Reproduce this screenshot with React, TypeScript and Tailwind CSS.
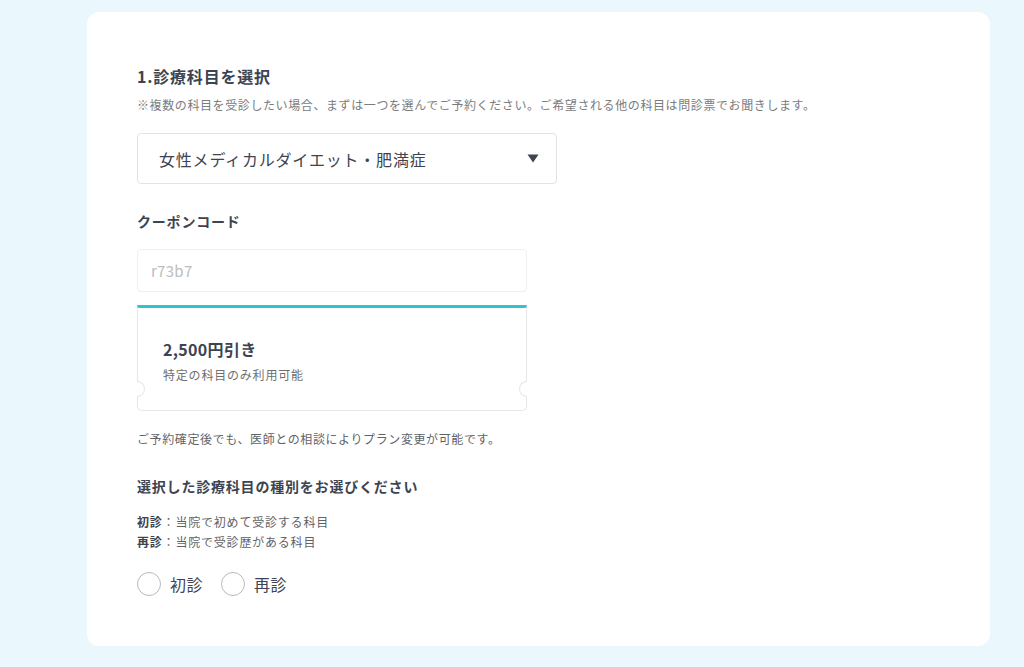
import { useState } from "react";

const font = { fontFamily: '"Noto Sans CJK JP", "Noto Sans", sans-serif' };

function Radio({ label, checked, onClick }: { label: string; checked: boolean; onClick: () => void }) {
  return (
    <button type="button" onClick={onClick} className="flex items-center gap-[9px]">
      <span className="flex h-6 w-6 items-center justify-center rounded-full border-[1.5px] border-[#b9b9b9] bg-white">
        {checked ? <span className="h-3 w-3 rounded-full bg-[#2ec5ce]" /> : null}
      </span>
      <span className="text-[16px] leading-6 tracking-[0.03em] text-[#3d4451]">{label}</span>
    </button>
  );
}

export default function App() {
  const [kind, setKind] = useState<string | null>(null);

  return (
    <div className="min-h-screen bg-[#eaf7fd] pt-3" style={font}>
      <div className="ml-[87px] h-[634px] w-[903px] rounded-xl bg-white pl-[50px] pt-[52px] tracking-[0.05em] text-[#3d4451]">
        <h2 className="text-[16px] font-bold leading-6">1.診療科目を選択</h2>
        <p className="mt-2 text-[12px] leading-[18px] tracking-[0.05em] text-[#7c7c7c]">
          ※複数の科目を受診したい場合、まずは一つを選んでご予約ください。ご希望される他の科目は問診票でお聞きします。
        </p>

        <div className="mt-[19px] flex h-[51px] w-[420px] items-center justify-between rounded-[4px] border border-[#e3e3e3] pl-[21px] pr-[17px]">
          <span className="text-[16px] leading-6 text-[#3d4451]">女性メディカルダイエット・肥満症</span>
          <svg width="12" height="9" viewBox="0 0 12 9" className="mt-[-1px]">
            <path d="M0.5 0.5 H11.5 L6 8.5 Z" fill="#3d4451" />
          </svg>
        </div>

        <h3 className="mt-[27px] text-[14px] font-bold leading-5">クーポンコード</h3>
        <div className="mt-[18px] flex h-[43px] w-[390px] items-center rounded-[4px] border border-[#f0f0f0] pl-[13px]">
          <span className="text-[15px] leading-6 tracking-[0.02em] text-[#bcbcbc]">r73b7</span>
        </div>

        <div className="relative mt-[13px] h-[106px] w-[390px] rounded-b-[5px] border-x border-b border-[#e6e6e6] border-t-[3px] border-t-[#2ec5ce] pl-[25px] pt-[29px]">
          <div className="text-[16px] font-bold leading-6 tracking-[0.02em]">2,500円引き</div>
          <div className="mt-[5px] text-[12px] leading-[18px] text-[#6f6f6f]">特定の科目のみ利用可能</div>
          <span className="absolute left-[-1px] top-[73px] h-[16px] w-[8px] rounded-r-full border-y border-r border-[#e6e6e6] bg-white" />
          <span className="absolute right-[-1px] top-[73px] h-[16px] w-[8px] rounded-l-full border-y border-l border-[#e6e6e6] bg-white" />
        </div>

        <p className="mt-[19px] text-[12px] leading-[18px] tracking-[0.05em] text-[#5f6368]">
          ご予約確定後でも、医師との相談によりプラン変更が可能です。
        </p>

        <h3 className="mt-[28px] text-[14px] font-bold leading-5">選択した診療科目の種別をお選びください</h3>

        <div className="mt-4 text-[12px] leading-5 text-[#5f6368]">
          <p>
            <span className="font-bold text-[#3d4451]">初診</span>：当院で初めて受診する科目
          </p>
          <p>
            <span className="font-bold text-[#3d4451]">再診</span>：当院で受診歴がある科目
          </p>
        </div>

        <div className="mt-5 flex items-center gap-[18px]">
          <Radio label="初診" checked={kind === "first"} onClick={() => setKind("first")} />
          <Radio label="再診" checked={kind === "repeat"} onClick={() => setKind("repeat")} />
        </div>
      </div>
    </div>
  );
}
